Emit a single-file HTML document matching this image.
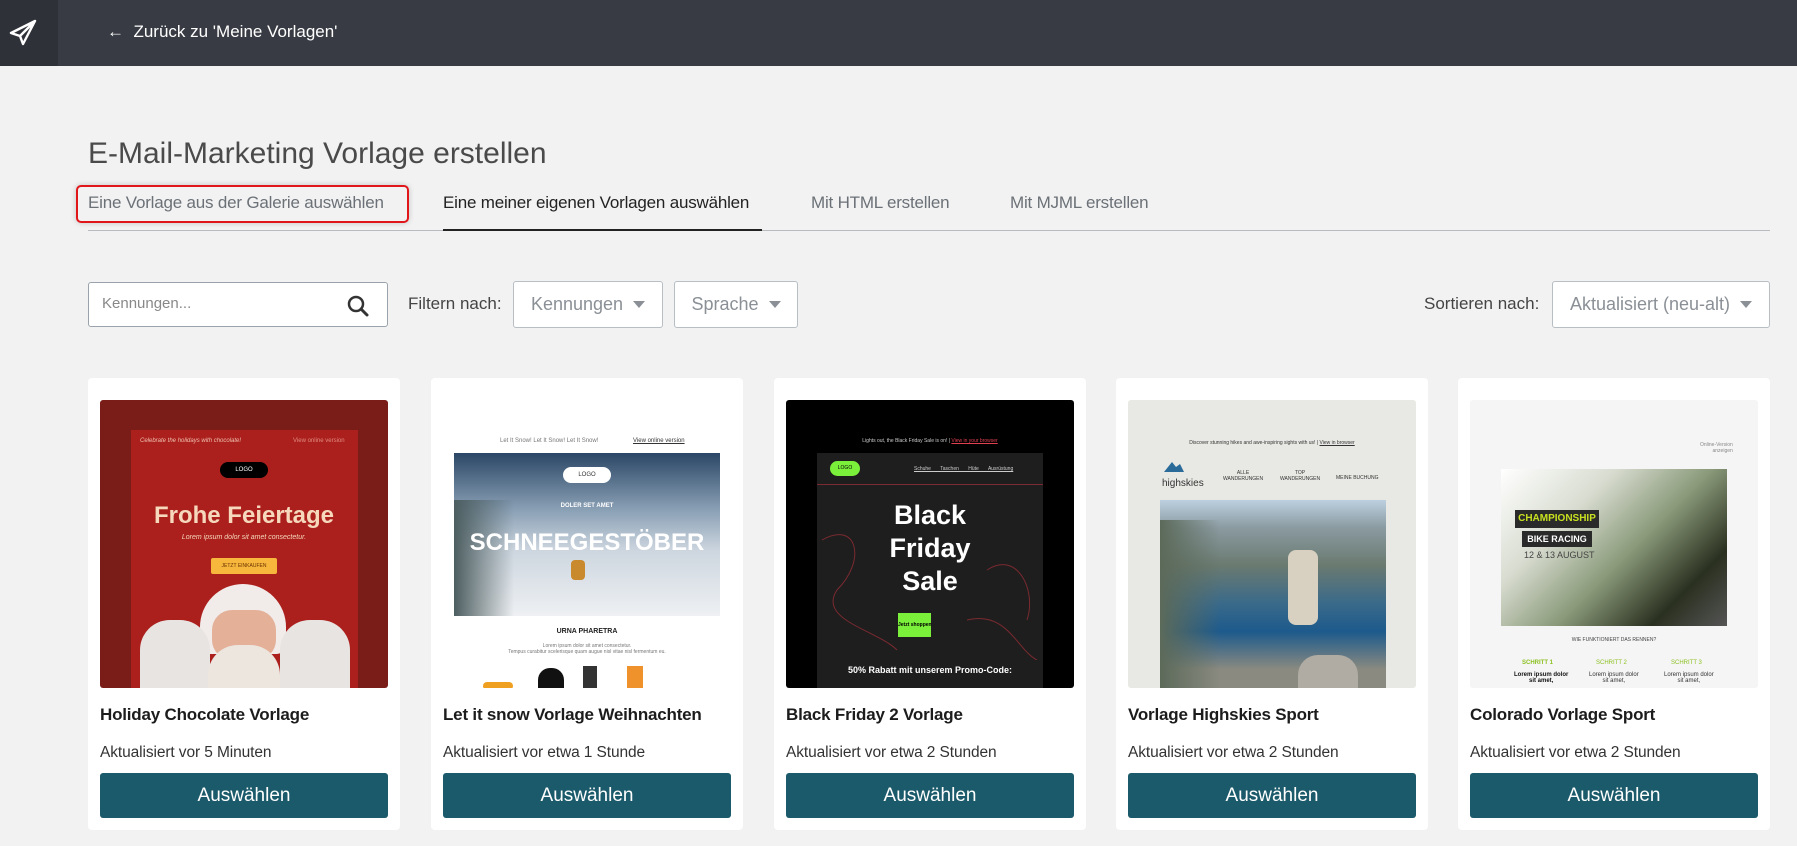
<!DOCTYPE html>
<html><head><meta charset="utf-8"><style>
*{box-sizing:border-box;margin:0;padding:0}
body{width:1797px;height:846px;background:#f2f2f2;font-family:"Liberation Sans",sans-serif;position:relative;overflow:hidden}
.a{position:absolute}
.hdr{left:0;top:0;width:1797px;height:66px;background:#383b43}
.logo{left:0;top:0;width:58px;height:66px;background:#2e3138}
.tab{top:193px;font-size:17px;color:#6b7177;white-space:nowrap;letter-spacing:-0.2px}
.inp{background:#fff;border:1px solid #9aa3ab;border-radius:3px}
.dd{background:#fff;border:1px solid #b7bec4;border-radius:3px;color:#8a9096;font-size:18px;display:flex;align-items:center;justify-content:center;gap:10px}
.tri{width:0;height:0;border-left:6px solid transparent;border-right:6px solid transparent;border-top:7px solid #8a9096}
.card{top:378px;width:312px;height:452px;background:#fff;border-radius:4px}
.img{left:12px;top:22px;width:288px;height:288px;border-radius:3px;overflow:hidden}
.ttl{left:12px;font-size:17px;font-weight:bold;color:#1c1c1c;white-space:nowrap;letter-spacing:-0.2px}
.upd{left:12px;font-size:15.5px;color:#333;white-space:nowrap;letter-spacing:-0.1px}
.btn{left:12px;top:395px;width:288px;height:45px;background:#1b5a6a;border-radius:3px;color:#fff;font-size:19px;display:flex;align-items:center;justify-content:center}
.c{text-align:center;left:0;width:288px;white-space:nowrap}
</style></head><body>
<div class="a hdr"></div>
<div class="a logo"><svg width="58" height="66" viewBox="0 0 58 66"><path d="M35 21 L11 33 L20 36 L23 44 Z M20 36 L35 21" fill="none" stroke="#fff" stroke-width="2.4" stroke-linejoin="round"/></svg></div>
<div class="a" style="left:107px;top:22px;color:#fff;font-size:17px">←&nbsp; Zurück zu 'Meine Vorlagen'</div>
<div class="a" style="left:88px;top:137px;font-size:30px;color:#4a4a4a">E-Mail-Marketing Vorlage erstellen</div>
<div class="a" style="left:88px;top:230px;width:1682px;height:1px;background:#b8bcc0"></div>
<div class="a" style="left:443px;top:229px;width:319px;height:2px;background:#222"></div>
<div class="a" style="left:76px;top:185px;width:333px;height:38px;border:2px solid #e0161b;border-radius:5px;box-shadow:0 0 6px rgba(0,0,0,.2)"></div>
<div class="a tab" style="left:88px">Eine Vorlage aus der Galerie auswählen</div>
<div class="a tab" style="left:443px;color:#222">Eine meiner eigenen Vorlagen auswählen</div>
<div class="a tab" style="left:811px">Mit HTML erstellen</div>
<div class="a tab" style="left:1010px">Mit MJML erstellen</div>
<div class="a inp" style="left:88px;top:282px;width:300px;height:45px"><span class="a" style="left:13px;top:12px;font-size:15px;color:#888">Kennungen...</span>
<svg class="a" style="left:257px;top:11px" width="24" height="24" viewBox="0 0 24 24"><circle cx="10" cy="10" r="7" fill="none" stroke="#333" stroke-width="2.5"/><path d="M15 15 L21 21" stroke="#333" stroke-width="3" stroke-linecap="round"/></svg></div>
<div class="a" style="left:408px;top:294px;font-size:17px;color:#444">Filtern nach:</div>
<div class="a dd" style="left:513px;top:281px;width:150px;height:47px">Kennungen<span class="tri"></span></div>
<div class="a dd" style="left:674px;top:281px;width:124px;height:47px">Sprache<span class="tri"></span></div>
<div class="a" style="left:1424px;top:294px;font-size:17px;color:#444">Sortieren nach:</div>
<div class="a dd" style="left:1552px;top:281px;width:218px;height:47px">Aktualisiert (neu-alt)<span class="tri"></span></div>

<!-- card 1 -->
<div class="a card" style="left:88px">
<div class="a img" style="background:#7a1c17">
<div class="a" style="left:31px;top:30px;width:227px;height:258px;background:#ab201d"></div>
<div class="a" style="left:40px;top:38px;font-size:6px;color:#f0c0b0;font-style:italic">Celebrate the holidays with chocolate!</div>
<div class="a" style="left:193px;top:38px;font-size:6px;color:#e08a80">View online version</div>
<div class="a" style="left:120px;top:62px;width:48px;height:16px;background:#000;border-radius:8px;color:#fff;font-size:6px;text-align:center;line-height:16px">LOGO</div>
<div class="a c" style="top:102px;font-size:24px;font-weight:bold;color:#f6d8bd">Frohe Feiertage</div>
<div class="a c" style="top:134px;font-size:7px;font-style:italic;color:#f6d8bd">Lorem ipsum dolor sit amet consectetur.</div>
<div class="a" style="left:111px;top:158px;width:66px;height:16px;background:#f6b73c;border-radius:2px;font-size:5px;text-align:center;line-height:16px;color:#6a3000">JETZT EINKAUFEN</div>
<div class="a" style="left:100px;top:184px;width:86px;height:70px;background:#f1ecea;border-radius:45px 45px 10px 10px"></div>
<div class="a" style="left:40px;top:220px;width:70px;height:80px;background:#e8e4e2;border-radius:30px 30px 0 0"></div>
<div class="a" style="left:180px;top:220px;width:70px;height:80px;background:#e8e4e2;border-radius:30px 30px 0 0"></div>
<div class="a" style="left:112px;top:210px;width:64px;height:50px;background:#e4b198;border-radius:20px"></div>
<div class="a" style="left:108px;top:245px;width:72px;height:50px;background:#ece6df;border-radius:30px 30px 0 0"></div>
</div>
<div class="a ttl" style="top:327px">Holiday Chocolate Vorlage</div>
<div class="a upd" style="top:366px">Aktualisiert vor 5 Minuten</div>
<div class="a btn">Auswählen</div></div>

<!-- card 2 -->
<div class="a card" style="left:431px">
<div class="a img" style="background:#fff">
<div class="a" style="left:57px;top:38px;font-size:6px;color:#777">Let It Snow! Let It Snow! Let It Snow!</div>
<div class="a" style="left:190px;top:38px;font-size:6px;color:#333;text-decoration:underline">View online version</div>
<div class="a" style="left:11px;top:53px;width:266px;height:163px;background:linear-gradient(180deg,#2b4766 0%,#8aa0b5 35%,#cdd6df 60%,#eef0f3 100%)"></div>
<div class="a" style="left:11px;top:100px;width:60px;height:116px;background:linear-gradient(90deg,#4d5e60,transparent)"></div>
<div class="a" style="left:120px;top:67px;width:48px;height:16px;background:#fff;border-radius:8px;font-size:6px;text-align:center;line-height:16px;color:#333">LOGO</div>
<div class="a c" style="top:103px;font-size:6px;font-weight:bold;color:#fff">DOLER SET AMET</div>
<div class="a c" style="top:129px;font-size:24px;font-weight:bold;color:#fff">SCHNEEGESTÖBER</div>
<div class="a" style="left:128px;top:160px;width:14px;height:20px;background:#c98a2e;border-radius:4px"></div>
<div class="a c" style="top:228px;font-size:7px;font-weight:bold;color:#222">URNA PHARETRA</div>
<div class="a c" style="top:243px;font-size:5px;color:#777">Lorem ipsum dolor sit amet consectetur.<br>Tempus curabitur scelerisque quam augue nisl vitae nisl fermentum eu.</div>
<div class="a" style="left:40px;top:282px;width:30px;height:8px;background:#f0a020;border-radius:4px"></div>
<div class="a" style="left:95px;top:268px;width:26px;height:22px;background:#111;border-radius:12px 12px 0 0"></div>
<div class="a" style="left:140px;top:266px;width:14px;height:22px;background:#333"></div>
<div class="a" style="left:184px;top:266px;width:16px;height:22px;background:#f0922b"></div>
</div>
<div class="a ttl" style="top:327px">Let it snow Vorlage Weihnachten</div>
<div class="a upd" style="top:366px">Aktualisiert vor etwa 1 Stunde</div>
<div class="a btn">Auswählen</div></div>

<!-- card 3 -->
<div class="a card" style="left:774px">
<div class="a img" style="background:#000">
<div class="a c" style="top:38px;font-size:5px;color:#ccc">Lights out, the Black Friday Sale is on! | <span style="color:#e04050;text-decoration:underline">View in your browser</span></div>
<div class="a" style="left:31px;top:53px;width:226px;height:235px;background:#1e1e1e"></div>
<div class="a" style="left:31px;top:84px;width:226px;height:1px;background:#7a2a30"></div>
<div class="a" style="left:44px;top:61px;width:30px;height:15px;background:#7af03a;border-radius:8px;font-size:5px;text-align:center;line-height:15px">LOGO</div>
<div class="a" style="left:128px;top:66px;font-size:5px;color:#ccc;text-decoration:underline;word-spacing:8px">Schuhe Taschen Hüte Ausrüstung</div>
<svg class="a" style="left:31px;top:100px" width="226" height="160"><path d="M5 40 C40 20 50 60 20 90 C0 120 60 130 80 150 M150 120 C190 110 200 150 220 160 M170 70 C200 50 220 90 210 120" fill="none" stroke="#7a2a30" stroke-width="1"/></svg>
<div class="a c" style="top:99px;font-size:27px;font-weight:bold;color:#fff;line-height:33px">Black<br>Friday<br>Sale</div>
<div class="a" style="left:112px;top:213px;width:33px;height:24px;background:#7af03a;font-size:5px;font-weight:bold;text-align:center;line-height:24px;white-space:nowrap">Jetzt shoppen</div>
<div class="a c" style="top:265px;font-size:9px;font-weight:bold;color:#fff">50% Rabatt mit unserem Promo-Code:</div>
</div>
<div class="a ttl" style="top:327px">Black Friday 2 Vorlage</div>
<div class="a upd" style="top:366px">Aktualisiert vor etwa 2 Stunden</div>
<div class="a btn">Auswählen</div></div>

<!-- card 4 -->
<div class="a card" style="left:1116px">
<div class="a img" style="background:#e8e8e4">
<div class="a c" style="top:40px;font-size:5px;color:#333">Discover stunning hikes and awe-inspiring sights with us! | <u>View in browser</u></div>
<div class="a" style="left:36px;top:62px;width:20px;height:10px;background:#2a6b9a;clip-path:polygon(0 100%,40% 0,60% 50%,80% 20%,100% 100%)"></div>
<div class="a" style="left:34px;top:78px;font-size:10px;color:#333">highskies</div>
<div class="a" style="left:95px;top:70px;font-size:5px;color:#333;text-align:center">ALLE<br>WANDERUNGEN</div>
<div class="a" style="left:152px;top:70px;font-size:5px;color:#333;text-align:center">TOP<br>WANDERUNGEN</div>
<div class="a" style="left:208px;top:75px;font-size:5px;color:#333">MEINE BUCHUNG</div>
<div class="a" style="left:32px;top:100px;width:226px;height:188px;background:linear-gradient(180deg,#bcd0e0 0%,#8a9aa0 15%,#6a7a70 35%,#3a6a8a 55%,#1d5a8c 70%,#8a8a80 90%)"></div>
<div class="a" style="left:32px;top:120px;width:60px;height:168px;background:linear-gradient(90deg,#5c6a5a,transparent)"></div>
<div class="a" style="left:160px;top:150px;width:30px;height:75px;background:#d8d0c0;border-radius:8px"></div>
<div class="a" style="left:170px;top:255px;width:60px;height:33px;background:#b0aca4;border-radius:20px 20px 0 0"></div>
</div>
<div class="a ttl" style="top:327px">Vorlage Highskies Sport</div>
<div class="a upd" style="top:366px">Aktualisiert vor etwa 2 Stunden</div>
<div class="a btn">Auswählen</div></div>

<!-- card 5 -->
<div class="a card" style="left:1458px">
<div class="a img" style="background:#f5f5f5">
<div class="a" style="left:230px;top:42px;font-size:5px;color:#888;text-align:right">Online-Version<br>anzeigen</div>
<div class="a" style="left:31px;top:69px;width:226px;height:157px;background:linear-gradient(135deg,#fff 0%,#d8dcd0 30%,#8a9a7a 55%,#2a3020 80%,#555 100%)"></div>
<div class="a" style="left:45px;top:110px;width:84px;height:18px;background:#2a2a2a;color:#c8e020;font-size:10px;font-weight:bold;text-align:center;line-height:18px">CHAMPIONSHIP</div>
<div class="a" style="left:52px;top:131px;width:70px;height:16px;background:#2a2a2a;color:#fff;font-size:9px;font-weight:bold;text-align:center;line-height:16px">BIKE RACING</div>
<div class="a" style="left:54px;top:150px;font-size:9px;color:#444">12 &amp; 13 AUGUST</div>
<div class="a c" style="top:237px;font-size:5px;color:#444">WIE FUNKTIONIERT DAS RENNEN?</div>
<div class="a" style="left:52px;top:260px;font-size:6px;color:#8cc020;font-weight:bold">SCHRITT 1</div>
<div class="a" style="left:126px;top:260px;font-size:6px;color:#8cc020">SCHRITT 2</div>
<div class="a" style="left:201px;top:260px;font-size:6px;color:#8cc020">SCHRITT 3</div>
<div class="a" style="left:44px;top:272px;font-size:6px;color:#111;font-weight:bold;text-align:center">Lorem ipsum dolor<br>sit amet,</div>
<div class="a" style="left:119px;top:272px;font-size:6px;color:#333;text-align:center">Lorem ipsum dolor<br>sit amet,</div>
<div class="a" style="left:194px;top:272px;font-size:6px;color:#333;text-align:center">Lorem ipsum dolor<br>sit amet,</div>
</div>
<div class="a ttl" style="top:327px">Colorado Vorlage Sport</div>
<div class="a upd" style="top:366px">Aktualisiert vor etwa 2 Stunden</div>
<div class="a btn">Auswählen</div></div>
</body></html>
